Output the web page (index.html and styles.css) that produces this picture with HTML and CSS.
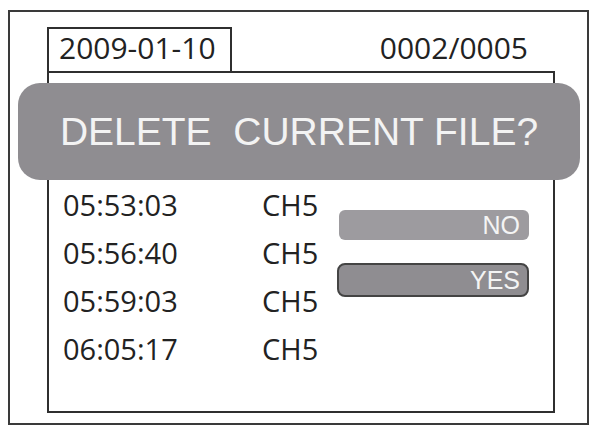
FILE: index.html
```html
<!DOCTYPE html>
<html lang="en">

<head>
  <meta charset="UTF-8">
  <meta name="viewport" content="width=device-width, initial-scale=1.0">
  <title>Delete File</title>
  <link rel="stylesheet" href="styles.css">
</head>

<body>
  <div class="frame">

    <!-- cabecalho: data e contador -->
    <div class="header">
      <div class="date">2009-01-10</div>
      <div class="counter">0002/0005</div>
    </div>

    <!-- lista de gravacoes -->
    <div class="panel">
      <div class="list">
        <div class="row"><span class="time">05:53:03</span><span>CH5</span></div>
        <div class="row"><span class="time">05:56:40</span><span>CH5</span></div>
        <div class="row"><span class="time">05:59:03</span><span>CH5</span></div>
        <div class="row"><span class="time">06:05:17</span><span>CH5</span></div>
      </div>

      <div class="buttons">
        <div class="btn btn-no">NO</div>
        <div class="btn btn-yes">YES</div>
      </div>
    </div>

    <!-- aviso por cima da lista -->
    <div class="banner">DELETE  CURRENT FILE?</div>
  </div>
</body>

</html>
```

FILE: styles.css
```css
body {
  margin: 0;
  background: #fff;
  font-family: "Open Sans", "Noto Sans", sans-serif;
  color: #222;
}

.frame {
  position: relative;
  margin: 10px 0 0 8px;
  width: 581px;
  height: 415px;
  border: 2px solid #3a3a3a;
  padding: 15px 0 0 37px;
  box-sizing: border-box;
}

.header {
  display: flex;
  align-items: baseline;
  width: 508px;
}

.date {
  width: 185px;
  box-sizing: border-box;
  border: 2px solid #2f2f2f;
  border-bottom: none;
  padding: 0 0 4px 10px;
  font-size: 30px;
  line-height: 38px;
}

.counter {
  margin-left: auto;
  padding-right: 27px;
  font-size: 30px;
  line-height: 38px;
}

.panel {
  display: grid;
  grid-template-columns: 290px 190px;
  width: 508px;
  height: 342px;
  box-sizing: border-box;
  border: 2px solid #2f2f2f;
}

.list {
  padding: 108px 0 0 14px;
}

.row {
  display: flex;
  font-size: 29px;
  line-height: 48px;
}

.time {
  width: 199px;
}

.buttons {
  padding-top: 137px;
  display: flex;
  flex-direction: column;
  gap: 23px;
}

.btn {
  box-sizing: border-box;
  text-align: right;
  color: #f4f4f4;
  font-family: "Liberation Sans", Arial, sans-serif;
  font-size: 25px;
}

.btn-no {
  height: 30px;
  line-height: 30px;
  padding-right: 9px;
  background: #9d9b9f;
  border-radius: 6px;
}

.btn-yes {
  margin-left: -2px;
  height: 34px;
  line-height: 30px;
  padding-right: 7px;
  background: #8f8d91;
  border: 2px solid #444;
  border-radius: 8px;
}

.banner {
  position: absolute;
  left: 8px;
  top: 71px;
  width: 562px;
  height: 97px;
  border-radius: 22px;
  background: #8f8d91;
  color: #f3f3f3;
  font-family: "Liberation Sans", Arial, sans-serif;
  font-size: 39px;
  line-height: 97px;
  text-align: center;
  white-space: pre;
}
```
